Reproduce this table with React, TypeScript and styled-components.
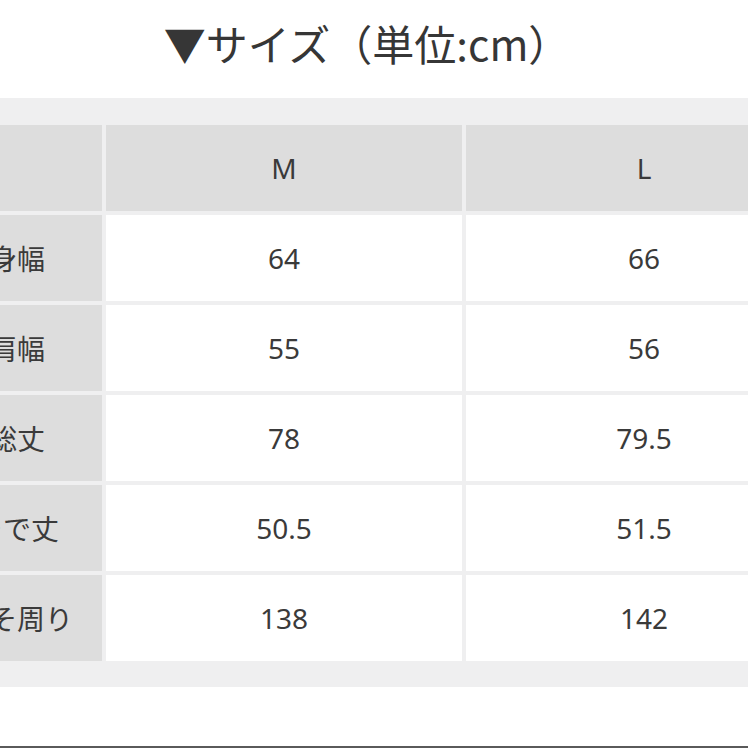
import React from "react";
import styled, { createGlobalStyle } from "styled-components";

const GlobalStyle = createGlobalStyle`
  html, body {
    margin: 0;
    padding: 0;
    background: #ffffff;
  }
  body {
    font-family: "Noto Sans", "Noto Sans CJK JP", sans-serif;
    color: #333333;
  }
`;

const SIZES = ["M", "L"];

const ROWS: { label: string; values: string[] }[] = [
  { label: "身幅", values: ["64", "66"] },
  { label: "肩幅", values: ["55", "56"] },
  { label: "総丈", values: ["78", "79.5"] },
  { label: "そで丈", values: ["50.5", "51.5"] },
  { label: "すそ周り", values: ["138", "142"] },
];

export default function App() {
  return (
    <Page>
      <GlobalStyle />
      <Title>▼サイズ（単位:cm）</Title>
      <Band>
        <Table>
          <Cell $kind="head" />
          {SIZES.map((s) => (
            <Cell key={s} $kind="head">
              {s}
            </Cell>
          ))}
          {ROWS.map((row) => (
            <React.Fragment key={row.label}>
              <Cell $kind="label">{row.label}</Cell>
              {row.values.map((v, i) => (
                <Cell key={i} $kind="value">
                  {v}
                </Cell>
              ))}
            </React.Fragment>
          ))}
        </Table>
      </Band>
      <Footer />
    </Page>
  );
}

const Page = styled.div`
  width: 748px;
  height: 748px;
  overflow: hidden;
  display: flex;
  flex-direction: column;
`;

const Title = styled.h2`
  margin: 0;
  height: 98px;
  display: flex;
  align-items: center;
  justify-content: center;
  padding: 0 14px 14px 0;
  box-sizing: border-box;
  font-family: "Noto Sans CJK JP", "Noto Sans", sans-serif;
  font-weight: 400;
  font-size: 42px;
  color: #363636;
`;

const Band = styled.section`
  background: #efeff0;
  padding: 27px 0 26px;
  overflow: hidden;
`;

const Table = styled.div`
  display: grid;
  grid-template-columns: 166px 356px 356px;
  grid-auto-rows: 86px;
  gap: 4px;
  margin-left: -64px;
  width: max-content;
`;

const Cell = styled.div<{ $kind: "head" | "label" | "value" }>`
  display: flex;
  align-items: center;
  justify-content: center;
  padding-right: ${(p) => (p.$kind === "label" ? "4px" : "0")};
  font-size: 28px;
  color: #3a3a3a;
  background: ${(p) => (p.$kind === "value" ? "#ffffff" : "#dddddd")};
  white-space: nowrap;
`;

const Footer = styled.footer`
  flex: 1;
  background: #ffffff;
  border-bottom: 2px solid #5a5a5a;
`;
